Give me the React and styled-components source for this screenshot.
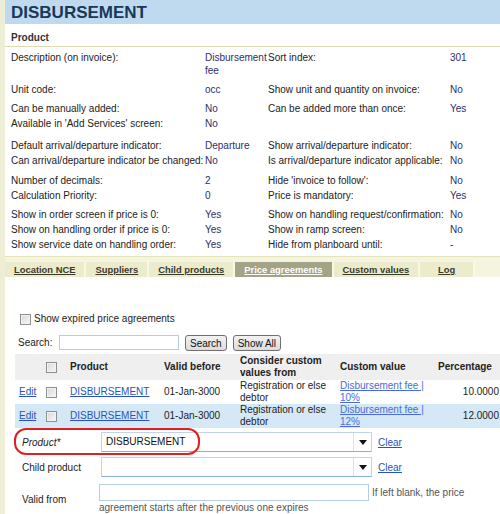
import React from 'react';
import styled, { createGlobalStyle } from 'styled-components';

const GlobalStyle = createGlobalStyle`
  body {
    margin: 0;
    overflow: hidden;
    background: #fff;
    font-family: "Liberation Sans", Arial, sans-serif;
    font-size: 10px;
    color: #222;
  }
`;

const properties = [
    { gap: 0, rows: [['Description (on invoice):', 'Disbursement fee', 'Sort index:', '301']] },
    { gap: 4, rows: [['Unit code:', 'occ', 'Show unit and quantity on invoice:', 'No']] },
    {
        gap: 4,
        rows: [
            ['Can be manually added:', 'No', 'Can be added more than once:', 'Yes'],
            ["Available in 'Add Services' screen:", 'No', '', ''],
        ],
    },
    {
        gap: 7,
        rows: [
            ['Default arrival/departure indicator:', 'Departure', 'Show arrival/departure indicator:', 'No'],
            ['Can arrival/departure indicator be changed:', 'No', 'Is arrival/departure indicator applicable:', 'No'],
        ],
    },
    {
        gap: 5,
        rows: [
            ['Number of decimals:', '2', "Hide 'invoice to follow':", 'No'],
            ['Calculation Priority:', '0', 'Price is mandatory:', 'Yes'],
        ],
    },
    {
        gap: 4,
        rows: [
            ['Show in order screen if price is 0:', 'Yes', 'Show on handling request/confirmation:', 'No'],
            ['Show on handling order if price is 0:', 'Yes', 'Show in ramp screen:', 'No'],
            ['Show service date on handling order:', 'Yes', 'Hide from planboard until:', '-'],
        ],
    },
];

const tabs = ['Location NCE', 'Suppliers', 'Child products', 'Price agreements', 'Custom values', 'Log'];

const columns = [
    { title: '', w: 27 },
    { title: 'check', w: 24 },
    { title: 'Product', w: 94 },
    { title: 'Valid before', w: 76 },
    { title: 'Consider custom values from', w: 100 },
    { title: 'Custom value', w: 98 },
    { title: 'Percentage', w: 66 },
];

const agreements = [
    { pct: '10.0000', custom: 'Disbursement fee | 10%' },
    { pct: '12.0000', custom: 'Disbursement fee | 12%' },
];

const Arrow = () => (
    <svg width="8" height="5" viewBox="0 0 8 5">
        <path d="M0 0 L8 0 L4 5 Z" fill="#111" />
    </svg>
);

const App = () => {
    return (
        <Page>
            <GlobalStyle />
            <TitleBar>DISBURSEMENT</TitleBar>
            <SectionHeader>Product</SectionHeader>
            <PropertyArea>
                {properties.map((group, gi) => (
                    <Group key={gi} $gap={group.gap}>
                        {group.rows.map((row, ri) => (
                            <PropRow key={ri}>
                                <Label>{row[0]}</Label>
                                <Value>{row[1]}</Value>
                                <Label>{row[2]}</Label>
                                <Value>{row[3]}</Value>
                            </PropRow>
                        ))}
                    </Group>
                ))}
            </PropertyArea>

            <TabStrip>
                {tabs.map((t) => (
                    <Tab key={t} $active={t === 'Price agreements'}>{t}</Tab>
                ))}
            </TabStrip>

            <Content>
                <CheckRow>
                    <Checkbox />
                    <span>Show expired price agreements</span>
                </CheckRow>
                <SearchRow>
                    <SearchLabel>Search:</SearchLabel>
                    <TextInput $width={118} $height={13} />
                    <Button>Search</Button>
                    <Button>Show All</Button>
                </SearchRow>

                <Grid>
                    <thead>
                        <tr>
                            {columns.map((c, i) => (
                                <Th key={i} $w={c.w}>
                                    {c.title === 'check' ? <Checkbox /> : c.title}
                                </Th>
                            ))}
                        </tr>
                    </thead>
                    <tbody>
                        {agreements.map((a, i) => (
                            <GridRow key={i} $alt={i % 2 === 1}>
                                <Td><Link>Edit</Link></Td>
                                <Td><Checkbox /></Td>
                                <Td><Link>DISBURSEMENT</Link></Td>
                                <Td>01-Jan-3000</Td>
                                <Td>Registration or else debtor</Td>
                                <Td><CustomLink>{a.custom}</CustomLink></Td>
                                <Td $right>{a.pct}</Td>
                            </GridRow>
                        ))}
                    </tbody>
                </Grid>

                <Form>
                    <Highlight />
                    <FormRow $h={26}>
                        <FormLabel $italic>Product*</FormLabel>
                        <Select>
                            <SelectText>DISBURSEMENT</SelectText>
                            <SelectArrow><Arrow /></SelectArrow>
                        </Select>
                        <Link>Clear</Link>
                    </FormRow>
                    <FormRow $h={24}>
                        <FormLabel>Child product</FormLabel>
                        <Select>
                            <SelectText></SelectText>
                            <SelectArrow><Arrow /></SelectArrow>
                        </Select>
                        <Link>Clear</Link>
                    </FormRow>
                    <DateRow>
                        <FormLabel>Valid from</FormLabel>
                        <DateField>
                            <DateLine>
                                <TextInput $width={268} $height={15} />
                                <Hint>If left blank, the price</Hint>
                            </DateLine>
                            <Hint>agreement starts after the previous one expires</Hint>
                        </DateField>
                    </DateRow>
                </Form>
            </Content>
        </Page>
    );
};

const Page = styled.div`
  border-left: 5px solid #eeeed6;
  min-height: 514px;
  width: 495px;
`;

const TitleBar = styled.div`
  height: 24px;
  line-height: 25px;
  background: #bfdaef;
  padding-left: 6px;
  font-size: 17px;
  font-weight: bold;
  color: #17385a;
`;

const SectionHeader = styled.div`
  padding: 7px 6px 2px;
  line-height: 13px;
  font-weight: bold;
  color: #333;
  border-bottom: 1px solid #dcdcb0;
`;

const PropertyArea = styled.div`
  padding: 3px 6px 4px;
`;

const Group = styled.div`
  margin-top: ${(p) => p.$gap}px;
`;

const PropRow = styled.div`
  display: grid;
  grid-template-columns: 194px 63px 182px 50px;
  line-height: 13px;
  padding: 1px 0;
`;

const Label = styled.div`
  color: #222;
  white-space: nowrap;
`;

const Value = styled.div`
  color: #2e2e6a;
`;

const TabStrip = styled.div`
  display: flex;
  border-top: 1px solid #e4e4bc;
  background: #f5f5df;
  padding-top: 5px;
`;

const Tab = styled.div`
  height: 15px;
  line-height: 15px;
  padding: 0 9px;
  min-width: 35px;
  text-align: center;
  font-weight: bold;
  font-size: 9.4px;
  text-decoration: underline;
  color: ${(p) => (p.$active ? '#fff' : '#3a3a2a')};
  background: ${(p) => (p.$active ? '#a3a385' : '#ececcc')};
  border-right: 2px solid #f8f8e8;
`;

const Content = styled.div`
  padding-top: 34px;
`;

const CheckRow = styled.div`
  display: flex;
  align-items: center;
  gap: 3px;
  padding-left: 15px;
  line-height: 14px;
  margin-top: 1px;
`;

const Checkbox = styled.span`
  display: inline-block;
  width: 9px;
  height: 9px;
  border: 1px solid #8e8f8f;
  background: linear-gradient(135deg, #d8d8d8, #f7f7f7);
  box-shadow: inset 0 0 0 1px #f2f2f2;
  vertical-align: middle;
`;

const SearchRow = styled.div`
  display: flex;
  align-items: center;
  height: 17px;
  margin-top: 8px;
  padding-left: 13px;
`;

const SearchLabel = styled.span`
  width: 41px;
`;

const TextInput = styled.div`
  width: ${(p) => p.$width}px;
  height: ${(p) => p.$height}px;
  border: 1px solid #b7cbe6;
  background: #fff;
`;

const Button = styled.div`
  height: 14px;
  line-height: 15px;
  margin-left: 6px;
  padding: 0 4px;
  border: 1px solid #707070;
  border-radius: 3px;
  background: linear-gradient(#f2f2f2, #dcdcdc);
  color: #111;
`;

const Grid = styled.table`
  border-collapse: collapse;
  margin: 3px 0 0 10px;
  table-layout: fixed;
  width: 485px;
`;

const Th = styled.th`
  box-sizing: border-box;
  width: ${(p) => p.$w}px;
  height: 26px;
  padding: 0 4px;
  background: #efefef;
  text-align: left;
  font-weight: bold;
  line-height: 12px;
  color: #222;
  white-space: ${(p) => (p.$w < 70 ? 'nowrap' : 'normal')};
`;

const GridRow = styled.tr`
  background: ${(p) => (p.$alt ? '#d5e8f6' : '#fff')};
`;

const Td = styled.td`
  height: 24px;
  padding: 0 4px;
  line-height: 12px;
  text-align: ${(p) => (p.$right ? 'right' : 'left')};
  padding-right: ${(p) => (p.$right ? '1px' : '4px')};
`;

const Link = styled.span`
  color: #2a52be;
  text-decoration: underline;
`;

const CustomLink = styled.span`
  color: #4a6be0;
  text-decoration: underline;
`;

const Form = styled.div`
  position: relative;
  padding-left: 17px;
  padding-top: 1px;
`;

const Highlight = styled.div`
  position: absolute;
  left: 9px;
  top: 0;
  width: 182px;
  height: 23px;
  border: 2px solid #e02020;
  border-radius: 12px;
`;

const FormRow = styled.div`
  display: flex;
  align-items: center;
  height: ${(p) => p.$h}px;
`;

const FormLabel = styled.div`
  width: 79px;
  font-style: ${(p) => (p.$italic ? 'italic' : 'normal')};
`;

const Select = styled.div`
  display: flex;
  width: 269px;
  height: 18px;
  border: 1px solid #c3d3ec;
  border-bottom-color: #8aaee0;
  margin-right: 6px;
`;

const SelectText = styled.div`
  flex: 1;
  line-height: 18px;
  padding-left: 4px;
  color: #111;
`;

const SelectArrow = styled.div`
  width: 17px;
  display: flex;
  align-items: center;
  justify-content: center;
  border-left: 1px solid #d6e0f0;
`;

const DateRow = styled.div`
  display: flex;
  align-items: center;
  margin-top: 5px;
`;

const DateField = styled.div`
  margin-left: -2px;
`;

const DateLine = styled.div`
  display: flex;
  align-items: center;
  gap: 3px;
`;

const Hint = styled.div`
  color: #555;
  line-height: 14px;
  white-space: nowrap;
`;

export default App;
